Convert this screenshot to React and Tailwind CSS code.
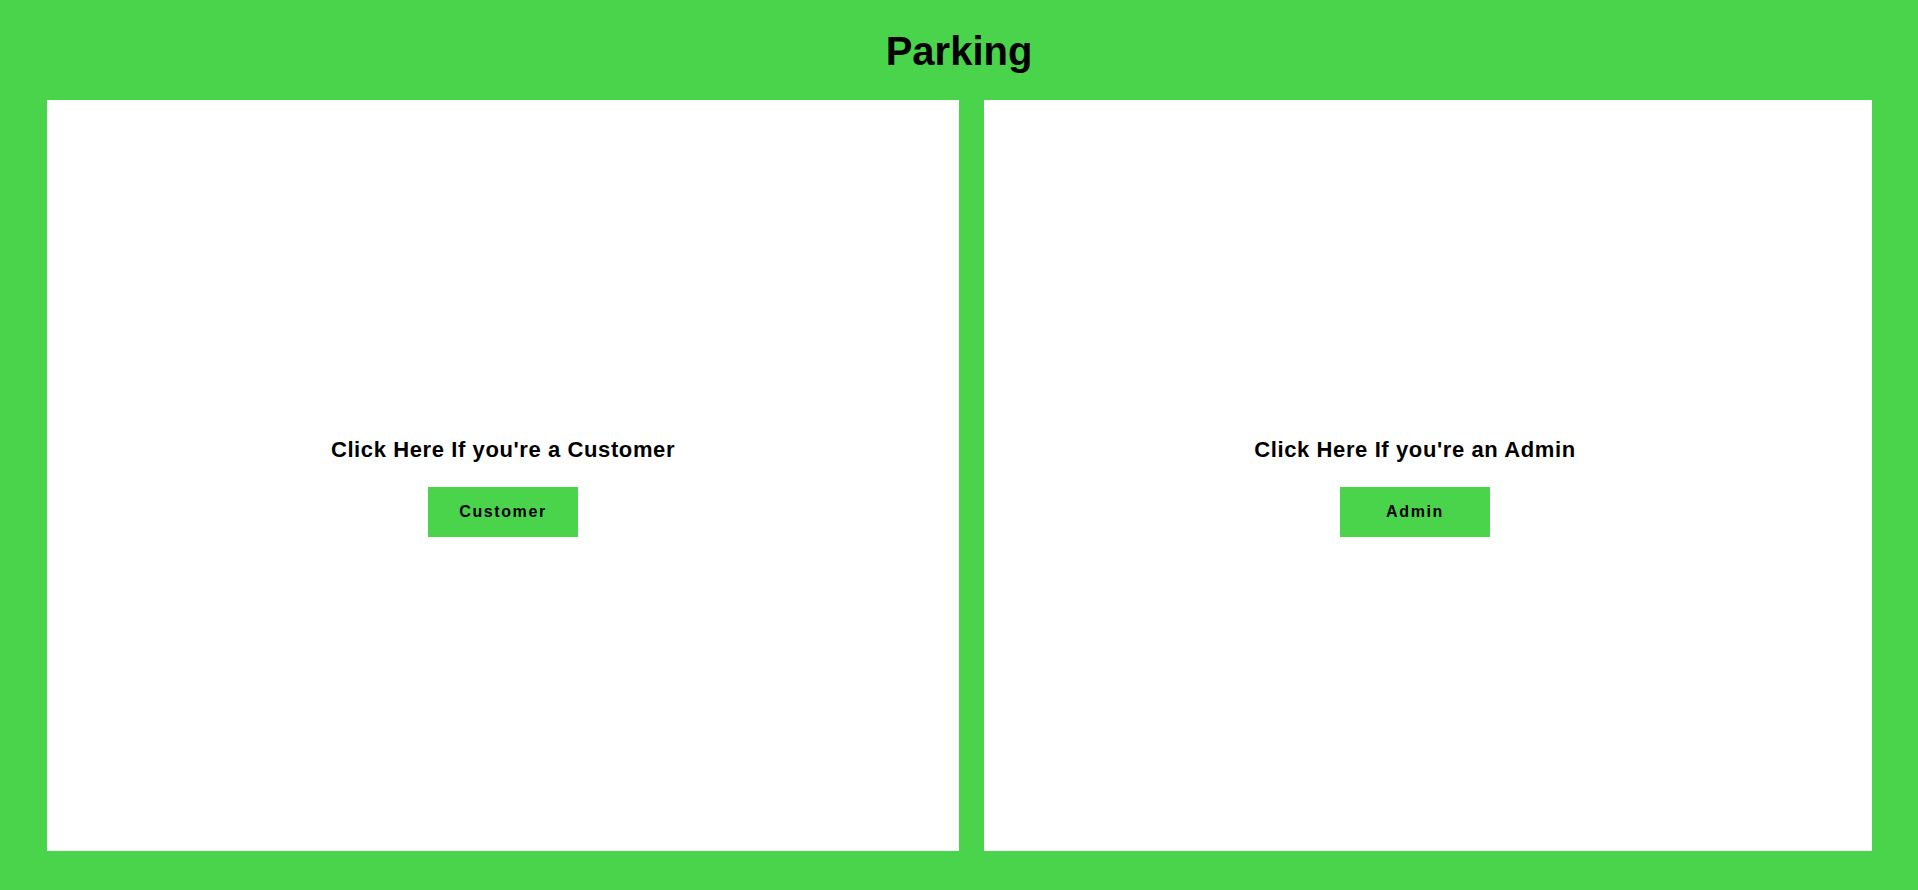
export default function App() {
  return (
    <div className="min-h-[890px] bg-[#4ad44c] flex flex-col font-['Liberation_Sans',Arial,sans-serif] text-black">
      <h1 className="pt-[28px] mb-[26px] text-center text-[40px] leading-[46px] font-bold">Parking</h1>
      <div className="grid grid-cols-[912px_1fr] gap-[25px] pl-[47px] pr-[46px] pb-[39px]">
        <RoleCard title="Click Here If you're a Customer" label="Customer" />
        <RoleCard title="Click Here If you're an Admin" label="Admin" className="pr-[26px]" />
      </div>
    </div>
  );
}

function RoleCard({ title, label, className = '' }) {
  return (
    <div className={`h-[751px] bg-white flex flex-col items-center justify-center pt-[23px] ${className}`}>
      <h2 className="text-[22px] leading-[25px] font-bold tracking-[0.6px]">{title}</h2>
      <button className="mt-[25px] w-[150px] h-[50px] bg-[#4ad44c] text-[16px] font-bold tracking-[0.1em] flex items-center justify-center">
        {label}
      </button>
    </div>
  );
}
